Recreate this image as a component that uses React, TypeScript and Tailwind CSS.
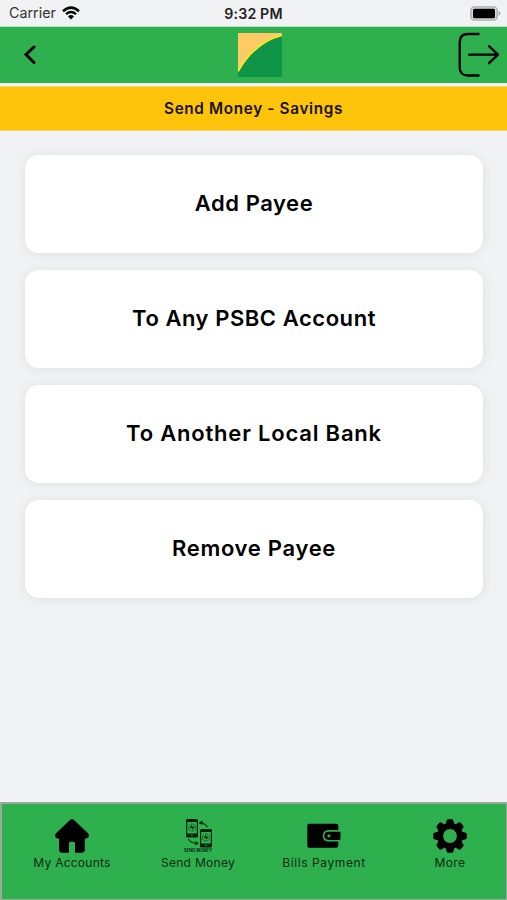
import React from "react";

const actions = [
  { label: "Add Payee", text: "tracking-[0.55px]" },
  { label: "To Any PSBC Account", text: "tracking-[0.55px]" },
  { label: "To Another Local Bank", text: "tracking-[0.8px]" },
  { label: "Remove Payee", text: "tracking-[0.7px]" },
];

function WifiIcon() {
  return (
    <svg width="18" height="14" viewBox="0 0 18 14" fill="none" stroke="#080808">
      <path d="M1 5.2Q9-1.8 17 5.2" strokeWidth="2.6" />
      <path d="M4 8.2Q9 4 14 8.2" strokeWidth="2.4" />
      <path d="M6 10.5Q9 7.7 12 10.5L9 13.6Z" fill="#080808" stroke="none" />
    </svg>
  );
}

function BatteryIcon() {
  return (
    <svg width="31" height="15" viewBox="0 0 31 15">
      <rect x=".9" y=".9" width="26.2" height="13.2" rx="3.6" fill="#d8d9d9" stroke="#aaabab" strokeWidth="1.4" />
      <rect x="3" y="2.7" width="22" height="9.6" rx="1.5" fill="#000" />
      <path d="M28.5 5v5q2-.6 2-2.5t-2-2.5" fill="#aaabab" />
    </svg>
  );
}

function Logo() {
  return (
    <svg width="44" height="44" viewBox="0 0 44 44">
      <path d="M0 0H44V44H0Z" fill="#109447" />
      <path d="M0 0H44V2.5Q17 9 0 38.5Z" fill="#fdcb66" />
      <path d="M0 38.5Q17 9 44 2.5" fill="none" stroke="#f7ee17" strokeWidth="1.6" />
    </svg>
  );
}

function LogoutIcon() {
  return (
    <svg width="42" height="46" viewBox="0 0 42 46" fill="none" stroke="#000" strokeWidth="2.3" strokeLinejoin="round">
      <path d="M21.5 2H10Q1.7 2 1.7 10.3V35.2Q1.7 43.5 10 43.5H21.5" />
      <path d="M11 22.7H40M31 14.2L40 22.7L31 31.2" strokeLinecap="round" />
    </svg>
  );
}

function HomeIcon() {
  return (
    <svg width="34" height="34" viewBox="0 0 34 34">
      <path d="M15 .9Q17 -.6 19 .9L32.8 14Q34.8 16.4 33 18.6Q32 19.7 29.8 19.4V30.5Q29.8 33.7 26.5 33.7H20V24.3Q20 22.8 18.4 22.8H15.4Q14 22.8 14 24.3V33.7H7.3Q4 33.7 4 30.5V19.4Q1.7 19.6.8 18.4Q-.8 16 1.3 14Z" />
    </svg>
  );
}

function Phone({ x, y }: { x: number; y: number }) {
  return (
    <g transform={`translate(${x} ${y})`}>
      <rect x=".6" y=".6" width="10.8" height="17.4" rx="1" fill="none" stroke="#05220c" strokeWidth="1.2" />
      <path d="M.6 1H11.4V3H.6ZM.6 14.5H11.4V18H.6Z" fill="#05220c" />
      <circle cx="6" cy="8.5" r="3.5" fill="none" stroke="#0b4a1d" strokeWidth="1" strokeDasharray="1.5 .6" />
      <path d="M4.3 9L5.6 7.2L6.6 9.5L7.8 7.5" fill="none" stroke="#05220c" strokeWidth="1.1" />
      <circle cx="6" cy="16.2" r=".7" fill="#2fb04f" />
    </g>
  );
}

function SendMoneyIcon() {
  return (
    <svg width="32" height="34" viewBox="0 0 32 34" className="overflow-visible">
      <Phone x={4} y={0} />
      <Phone x={18} y={10} />
      <g fill="none" stroke="#082e12" strokeWidth="1.1">
        <path d="M17.5 4Q22.5 3.5 25.5 8" />
        <path d="M6.5 20Q8.5 24.5 15.5 24.3" />
      </g>
      <path d="M16.5 4L20.5 1.5V6ZM17 24.3L13.2 22V26.5Z" fill="#082e12" />
      <text x="2" y="32.8" fill="#082e12" fontSize="4.2" fontWeight="700" textLength="28" lengthAdjust="spacingAndGlyphs">SEND MONEY</text>
    </svg>
  );
}

function WalletIcon() {
  return (
    <svg width="34" height="26" viewBox="0 0 34 26">
      <path d="M2 .8H29Q31.3.8 31.3 3V7H21.5Q15.8 7.4 15.8 12.9T21.5 18.5H31.3V22.5Q31.3 24.8 29 24.8H2Q.3 24.8.3 22.8V2.8Q.3.8 2 .8Z" />
      <path fillRule="evenodd" d="M21.8 8.7H32.5Q33.5 8.7 33.5 9.7V16Q33.5 17 32.5 17H21.8Q17.3 16.7 17.3 12.8T21.8 8.7ZM22 11.2A1.6 1.6 0 1 0 22 14.4A1.6 1.6 0 1 0 22 11.2" />
    </svg>
  );
}

function GearIcon() {
  return (
    <svg width="34" height="34" viewBox="-17 -17 34 34">
      <circle r="9.9" fill="none" stroke="#000" strokeWidth="6" />
      {[0, 45, 90, 135, 180, 225, 270, 315].map((angle) => (
        <path key={angle} transform={`rotate(${angle})`} d="M-4.5-11.5L-3.3-15.7Q-3-16.8-1.8-16.8H1.8Q3-16.8 3.3-15.7L4.5-11.5Z" />
      ))}
    </svg>
  );
}

const tabs = [
  { label: "My Accounts", icon: <HomeIcon />, text: "tracking-[0.25px]" },
  { label: "Send Money", icon: <SendMoneyIcon />, text: "tracking-[0.3px]" },
  { label: "Bills Payment", icon: <WalletIcon />, text: "tracking-[0.6px]" },
  { label: "More", icon: <GearIcon />, text: "tracking-[0.4px]" },
];

export default function App() {
  return (
    <div className="flex h-[900px] w-[507px] flex-col overflow-hidden bg-[#f0f2f4] font-['Inter',sans-serif] text-black">
      <div className="grid h-[26px] shrink-0 grid-cols-3 items-center pt-px">
        <div className="flex items-center gap-[6px] pl-[9px] text-[14.3px] leading-none text-[#333]">
          <span>Carrier</span>
          <WifiIcon />
        </div>
        <div className="pt-px text-center text-[14.2px] leading-none font-semibold tracking-[0.15px] text-[#222]">9:32 PM</div>
        <div className="flex justify-end pr-[6px]"><BatteryIcon /></div>
      </div>

      <header className="grid h-[57px] shrink-0 grid-cols-3 items-center border-t border-[#b4dfc0] bg-[#2fb04f] pb-px">
        <button className="pl-[23px]" aria-label="Back">
          <svg width="14" height="20" viewBox="0 0 14 20" fill="none" stroke="#000" strokeWidth="3" strokeLinecap="round">
            <path d="M11 2L3 9.5L11 17.5" />
          </svg>
        </button>
        <div className="flex justify-center pl-[13px]"><Logo /></div>
        <button className="flex justify-end pr-[7px]" aria-label="Log out"><LogoutIcon /></button>
      </header>

      <div className="mt-[3px] flex h-[45px] shrink-0 items-center justify-center border-y border-[#f6d471] bg-[#fec30b] pt-[2px]">
        <h1 className="text-[15.3px] font-semibold tracking-[0.65px] text-[#171300]">Send Money - Savings</h1>
      </div>

      <main className="flex flex-1 flex-col gap-[17px] px-[25px] pt-[23.5px]">
        {actions.map((action) => (
          <button key={action.label} className="h-[98px] w-[458px] rounded-[14px] bg-white text-[22px] font-semibold shadow-[0_1px_12px_rgba(0,0,0,0.08)]">
            <span className={action.text}>{action.label}</span>
          </button>
        ))}
      </main>

      <nav className="grid h-[98px] shrink-0 grid-cols-[repeat(4,112px)] gap-x-[14px] border-2 border-r border-b border-[#9ba79f] bg-[#2fb04f] pl-[14px]">
        {tabs.map((tab) => (
          <div key={tab.label} className="flex flex-col items-center pt-[14px]">
            <div className="flex h-[36px] items-center justify-center">{tab.icon}</div>
            <span className={"text-[12px] leading-[17px] whitespace-nowrap text-[#062b10] " + tab.text}>{tab.label}</span>
          </div>
        ))}
      </nav>
    </div>
  );
}
